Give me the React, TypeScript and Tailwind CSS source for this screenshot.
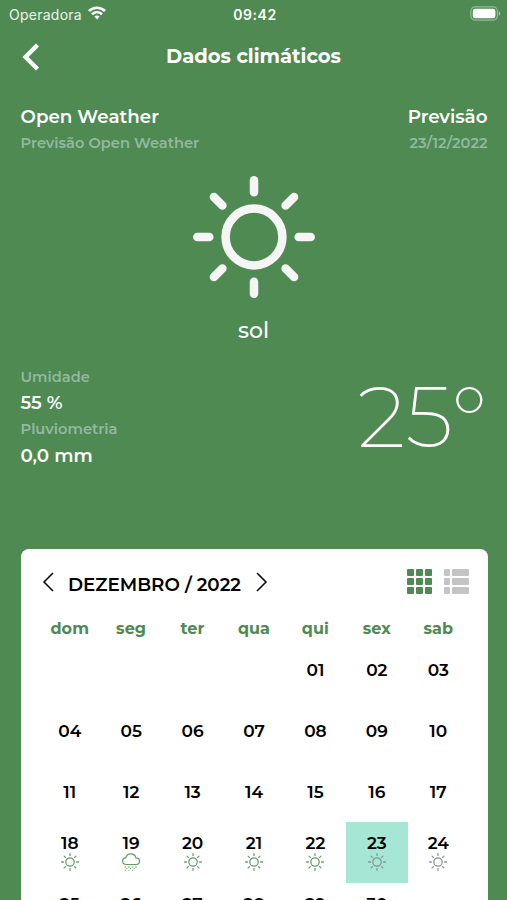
import clsx from 'clsx'

const weekdays = ['dom', 'seg', 'ter', 'qua', 'qui', 'sex', 'sab']

type Weather = 'sun' | 'rain'

const forecast: Record<number, Weather> = {
  18: 'sun',
  19: 'rain',
  20: 'sun',
  21: 'sun',
  22: 'sun',
  23: 'sun',
  24: 'sun',
  25: 'sun',
  26: 'sun',
  27: 'sun',
  28: 'sun',
  29: 'sun',
  30: 'sun',
}

const selectedDay = 23
const days = Array.from({ length: 31 }, (_, i) => i + 1)
const angles = [0, 45, 90, 135, 180, 225, 270, 315]

function SunIcon({ className }: { className?: string }) {
  return (
    <svg viewBox="0 0 122 122" className={className} fill="none" stroke="currentColor" strokeWidth="8.5">
      <circle cx="61" cy="61" r="28.4" />
      {angles.map((angle) => (
        <path key={angle} d="M61 4.3V16.3" strokeLinecap="round" transform={`rotate(${angle} 61 61)`} />
      ))}
    </svg>
  )
}

function RainIcon({ className }: { className?: string }) {
  return (
    <svg viewBox="0 0 18 18" className={className} fill="none" stroke="currentColor" strokeWidth="1.2" strokeLinecap="round">
      <path d="M4.3 11.5C2 11.5 .6 10 .6 8.1C.6 6.3 2 4.9 3.8 4.9C4.2 2.4 6.2.8 8.8.8C11.5.8 13.4 2.4 13.9 4.8C16 4.8 17.5 6.3 17.5 8.2C17.5 10.1 16 11.5 13.8 11.5Z" />
      <path
        strokeWidth="1"
        d="M3 14H3.8M6.4 14H7.2M10 14H10.8M13.6 14H14.4M5 15.4L4.6 15.9M8.6 15.4L8.2 15.9M12.3 15.4L11.9 15.9M3.2 17.2H3.3M6.8 17.2H6.9M10.4 17.2H10.5"
      />
    </svg>
  )
}

function StatusBar() {
  return (
    <div className="grid h-7 grid-cols-3 items-center pl-[9px] pr-[6px] font-['Inter',sans-serif] text-[14px]">
      <div className="flex items-center">
        <span className="w-[79px] tracking-[0.25px] text-white/90">Operadora</span>
        <svg viewBox="0 0 18 14" className="-mt-[2px] h-[14px] w-[18px]" fill="none" stroke="white" strokeWidth="2.6">
          <path d="M1 5C5.6.6 12.4.6 17 5" />
          <path d="M4 8.2C6.9 5.5 11.1 5.5 14 8.2" />
          <path d="M6.3 10.5C7.8 9.2 10.2 9.2 11.7 10.5L9 13.5Z" fill="white" stroke="none" />
        </svg>
      </div>
      <span className="text-center font-semibold tracking-[0.6px]">09:42</span>
      <svg viewBox="0 0 31 15" className="-mt-[2px] h-[15px] w-[31px] justify-self-end">
        <rect x=".9" y=".9" width="26.5" height="13.2" rx="4" fill="none" stroke="white" strokeOpacity=".4" strokeWidth="1.2" />
        <rect x="2.8" y="2.8" width="22.6" height="9.4" rx="2.3" fill="white" />
        <path d="M28.8 5.2C30.8 6 30.8 9 28.8 9.8Z" fill="white" fillOpacity=".5" />
      </svg>
    </div>
  )
}

function Calendar() {
  return (
    <section className="ml-[20.5px] mt-[84px] h-[380px] w-[467px] overflow-hidden rounded-t-lg bg-white text-black">
      <div className="flex h-[66px] items-center pl-[21.5px] pr-[18.5px]">
        <svg viewBox="0 0 12 20" className="h-5 w-3" fill="none" stroke="currentColor" strokeWidth="1.5">
          <path d="M11 1L2 10L11 19" />
        </svg>
        <h2 className="ml-[14px] mt-[5px] w-[188px] whitespace-nowrap text-[18.3px] font-semibold">DEZEMBRO / 2022</h2>
        <svg viewBox="0 0 12 20" className="h-5 w-3" fill="none" stroke="currentColor" strokeWidth="1.5">
          <path d="M1 1L10 10L1 19" />
        </svg>
        <div className="mb-[2px] ml-auto grid grid-cols-3 gap-[2px] text-[#4e8a52]">
          {Array.from({ length: 9 }, (_, i) => (
            <div key={i} className="size-[7px] rounded-[1px] bg-current" />
          ))}
        </div>
        <div className="mb-[2px] ml-[12px] grid grid-cols-[6px_17px] gap-[2px]">
          {Array.from({ length: 6 }, (_, i) => (
            <div key={i} className="h-[7px] rounded-[1px] bg-[#c4c4c4]" />
          ))}
        </div>
      </div>
      <div className="mx-auto grid w-[430px] grid-cols-7 text-center">
        {weekdays.map((day) => (
          <div key={day} className="h-6 text-[16px] leading-[27px] font-bold tracking-[0.1px] text-[#4e8a52]">
            {day}
          </div>
        ))}
      </div>
      <div className="mx-auto grid w-[430px] auto-rows-[61px] grid-cols-7">
        {days.map((day) => (
          <div
            key={day}
            className={clsx(
              'flex flex-col items-center justify-center',
              day === 1 && 'col-start-5',
              forecast[day] && 'pb-[1px]',
              day === selectedDay && 'bg-[#a6e6d4]'
            )}
          >
            <span className="text-[17px] leading-5 font-semibold">{String(day).padStart(2, '0')}</span>
            {forecast[day] === 'sun' && (
              <SunIcon className={clsx('size-[18px]', day >= selectedDay ? 'text-[#8b918e]' : 'text-[#659b69]')} />
            )}
            {forecast[day] === 'rain' && <RainIcon className="size-[18px] text-[#659b69]" />}
          </div>
        ))}
      </div>
    </section>
  )
}

export default function App() {
  return (
    <main className="h-[900px] w-[507px] overflow-hidden bg-[#4e8a52] font-['Montserrat','Inter',sans-serif] text-white">
      <StatusBar />
      <header className="grid h-[57px] grid-cols-[1fr_auto_1fr] items-center px-[22px]">
        <svg viewBox="0 0 18 28" className="h-7 w-[18px]" fill="none" stroke="currentColor" strokeWidth="4.3">
          <path d="M15.5 2L3.5 14L15.5 26" />
        </svg>
        <h1 className="text-[19.5px] font-bold">Dados climáticos</h1>
      </header>
      <div className="ml-[20.5px] mt-[18px] flex h-[52px] w-[467px] justify-between">
        <div>
          <p className="text-[18.3px] leading-7 font-semibold">Open Weather</p>
          <p className="text-[14.65px] leading-6 font-semibold text-[#92b9a0]">Previsão Open Weather</p>
        </div>
        <div className="text-right">
          <p className="text-[18.3px] leading-7 font-semibold">Previsão</p>
          <p className="text-[14.65px] leading-6 font-semibold text-[#92b9a0]">23/12/2022</p>
        </div>
      </div>
      <div className="mt-[21px] flex flex-col items-center">
        <SunIcon className="size-[122px] text-[#f5f5f5]" />
        <p className="mt-[17px] text-[22px] leading-8 font-medium">sol</p>
      </div>
      <div className="ml-[20.5px] mt-[18px] flex h-[100px] w-[467px] justify-between">
        <div>
          <p className="text-[14.65px] leading-6 font-semibold text-[#92b9a0]">Umidade</p>
          <p className="text-[18.3px] leading-7 font-semibold">55 %</p>
          <p className="text-[14.65px] leading-[25px] font-semibold text-[#92b9a0]">Pluviometria</p>
          <p className="text-[18.3px] leading-[27px] font-semibold">0,0 mm</p>
        </div>
        <p className="pt-[2px] text-[86px] leading-[100px] font-extralight">25°</p>
      </div>
      <Calendar />
    </main>
  )
}
